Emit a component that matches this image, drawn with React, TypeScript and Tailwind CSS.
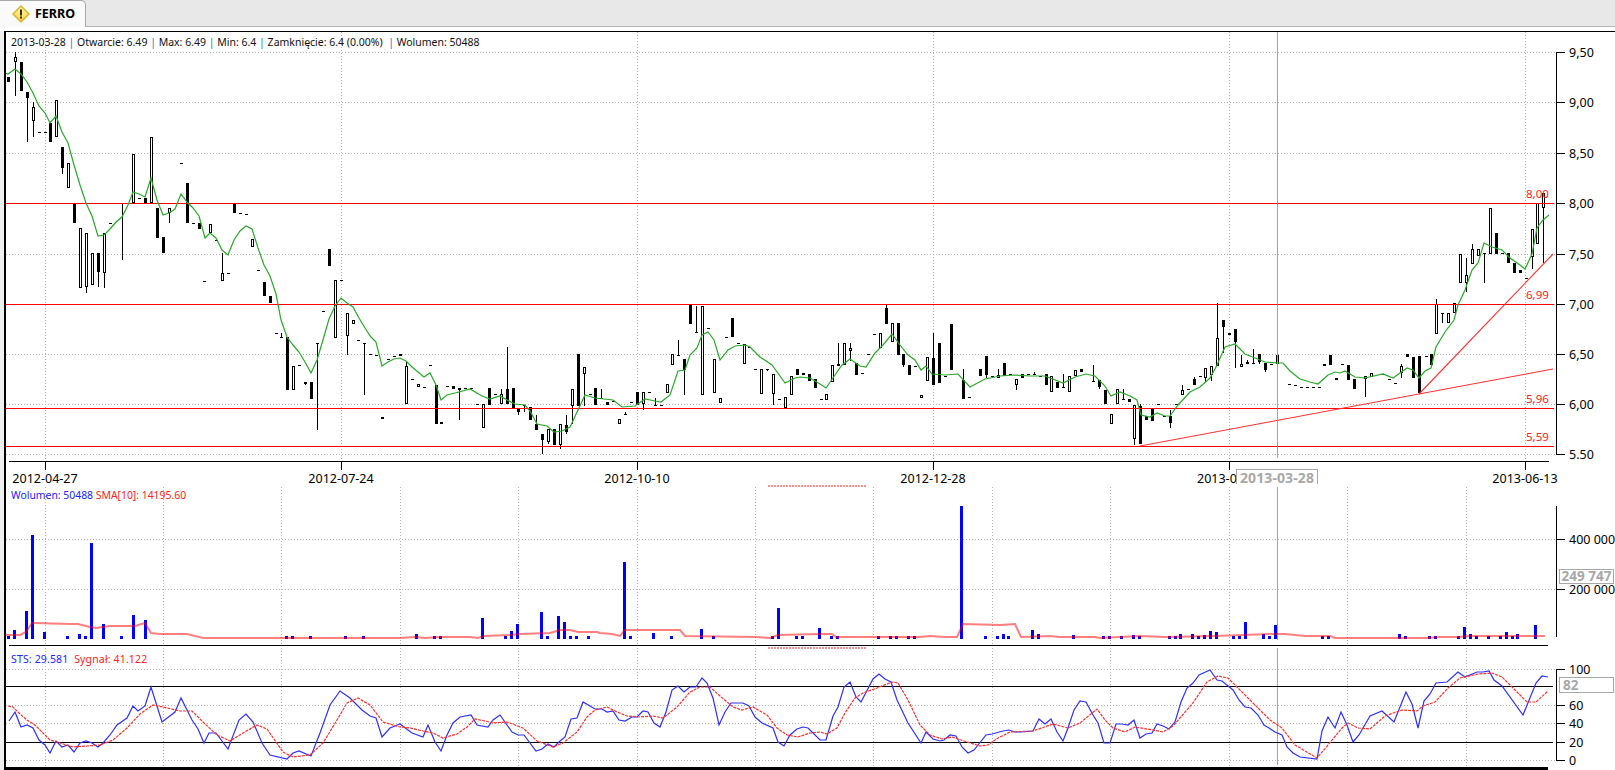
type Candle = [string, number, number, number, number?, number?];

// kind, x, body top, body bottom, wick top, wick bottom ("d" is a flat dash: x, y, y)
const candles: Candle[] = [
  ["f", 8, 77, 82], ["h", 15, 57, 62, 52, 96], ["f", 21, 62, 91], ["f", 27, 92, 98, 92, 142], ["h", 33, 107, 121, 102, 137],
  ["d", 39, 132, 132], ["d", 45, 132, 132], ["f", 50, 123, 142], ["h", 56, 100, 137], ["f", 62, 147, 168, 147, 174],
  ["h", 68, 163, 188], ["f", 74, 203, 223], ["h", 80, 228, 288], ["h", 86, 233, 287, 233, 293], ["h", 92, 253, 285],
  ["f", 98, 253, 272, 253, 287], ["h", 104, 233, 273, 233, 288], ["d", 110, 223, 223], ["d", 122, 203, 203, 203, 260],
  ["h", 133, 154, 203], ["d", 139, 198, 198], ["f", 145, 198, 203], ["h", 151, 137, 203], ["f", 157, 208, 238],
  ["f", 163, 237, 253], ["h", 169, 208, 213, 208, 223], ["d", 181, 163, 163], ["f", 187, 183, 223], ["d", 193, 223, 223],
  ["f", 199, 223, 229], ["d", 204, 281, 281], ["h", 210, 224, 233], ["d", 216, 240, 240], ["h", 222, 273, 281, 253, 281],
  ["d", 228, 273, 273], ["f", 234, 203, 213], ["d", 240, 213, 213], ["d", 246, 214, 214], ["h", 252, 239, 247],
  ["d", 258, 270, 270], ["f", 264, 282, 296], ["f", 270, 296, 303], ["d", 276, 333, 333], ["d", 281, 337, 337, 333, 337],
  ["f", 287, 337, 390], ["h", 293, 366, 390], ["d", 299, 365, 365], ["f", 305, 382, 384, 382, 385], ["f", 311, 382, 399],
  ["d", 317, 343, 343, 343, 430], ["d", 323, 311, 311], ["f", 329, 249, 266], ["h", 335, 280, 338], ["d", 341, 280, 280],
  ["h", 347, 313, 336, 313, 355], ["h", 353, 320, 324], ["d", 358, 340, 340], ["d", 364, 343, 343, 343, 395],
  ["d", 370, 354, 354], ["d", 376, 355, 355], ["f", 382, 417, 419], ["d", 388, 359, 359], ["d", 394, 356, 356],
  ["f", 400, 354, 356], ["h", 406, 366, 404, 361, 404], ["d", 412, 379, 379], ["h", 418, 384, 387], ["d", 424, 387, 387],
  ["d", 430, 365, 365], ["f", 436, 385, 424], ["f", 441, 422, 424], ["d", 447, 386, 386], ["f", 453, 386, 389],
  ["f", 459, 388, 390, 388, 420], ["d", 465, 388, 388], ["d", 471, 388, 388], ["d", 477, 404, 404], ["h", 483, 404, 428],
  ["f", 489, 388, 405], ["d", 495, 394, 394], ["h", 501, 394, 404, 389, 404], ["f", 507, 389, 404, 347, 404],
  ["f", 513, 388, 409], ["f", 518, 409, 412, 409, 415], ["d", 524, 405, 405, 405, 412], ["f", 530, 407, 420],
  ["f", 536, 424, 430, 415, 430], ["f", 542, 434, 440, 434, 454], ["h", 548, 429, 442, 429, 444], ["f", 554, 429, 445],
  ["h", 560, 424, 445, 424, 449], ["f", 566, 425, 432, 415, 434], ["h", 572, 389, 406, 389, 424], ["f", 578, 354, 406],
  ["h", 584, 367, 374, 367, 406], ["d", 590, 394, 394], ["f", 595, 388, 405], ["d", 601, 398, 398, 389, 398],
  ["f", 607, 402, 405], ["d", 613, 401, 401], ["h", 619, 419, 424], ["d", 625, 414, 414, 412, 414], ["d", 631, 402, 402],
  ["f", 637, 392, 405], ["h", 643, 392, 404, 392, 410], ["d", 649, 392, 392], ["d", 655, 405, 405, 398, 405],
  ["d", 661, 405, 405], ["h", 667, 384, 393], ["h", 672, 354, 365], ["d", 678, 355, 355, 340, 355],
  ["f", 684, 359, 370, 359, 395], ["f", 690, 305, 324], ["d", 696, 332, 332, 306, 332], ["h", 702, 306, 395],
  ["d", 708, 328, 328], ["h", 714, 359, 393], ["h", 720, 398, 403], ["d", 726, 337, 337], ["f", 732, 318, 337],
  ["d", 738, 343, 343], ["h", 744, 344, 364], ["d", 749, 347, 347], ["d", 755, 369, 369], ["h", 761, 369, 394],
  ["d", 767, 369, 369, 369, 371], ["h", 773, 374, 394, 374, 405], ["d", 779, 399, 399], ["h", 785, 397, 408],
  ["h", 791, 376, 395], ["f", 797, 369, 375], ["f", 803, 373, 375], ["f", 809, 374, 381], ["f", 815, 379, 388],
  ["f", 821, 399, 400], ["h", 826, 394, 400], ["h", 832, 365, 382], ["f", 838, 364, 366, 343, 366], ["h", 844, 343, 365],
  ["h", 850, 348, 351, 343, 361], ["f", 856, 363, 375], ["d", 862, 373, 373], ["d", 868, 354, 354], ["d", 874, 334, 334],
  ["h", 880, 333, 348], ["f", 886, 308, 324, 305, 324], ["h", 892, 323, 342], ["f", 898, 323, 355],
  ["f", 903, 354, 365, 354, 367], ["f", 909, 365, 375], ["d", 915, 366, 366], ["h", 921, 395, 398], ["h", 927, 357, 381],
  ["f", 933, 358, 385, 333, 385], ["f", 939, 343, 383], ["d", 945, 376, 376], ["f", 951, 324, 370],
  ["f", 963, 380, 399, 369, 399], ["d", 969, 397, 397], ["f", 980, 369, 376], ["f", 986, 356, 375, 356, 378],
  ["d", 992, 376, 376], ["h", 998, 375, 378, 369, 378], ["f", 1004, 363, 376], ["d", 1010, 374, 374],
  ["h", 1016, 379, 385, 379, 390], ["f", 1022, 374, 378], ["d", 1028, 374, 374], ["d", 1034, 374, 374, 372, 374],
  ["d", 1040, 376, 376], ["f", 1046, 374, 385], ["h", 1051, 376, 392], ["f", 1057, 382, 388, 382, 388],
  ["f", 1063, 387, 388, 374, 388], ["h", 1069, 376, 392], ["h", 1075, 370, 376], ["f", 1081, 369, 372],
  ["d", 1093, 381, 381, 365, 381], ["f", 1099, 380, 387, 380, 389], ["f", 1105, 390, 404], ["h", 1111, 414, 424],
  ["h", 1117, 389, 404], ["f", 1123, 399, 400, 389, 400], ["f", 1129, 399, 402], ["h", 1134, 405, 439, 405, 445],
  ["f", 1140, 406, 444, 404, 444], ["f", 1146, 416, 420], ["f", 1152, 409, 421], ["d", 1158, 404, 404], ["d", 1164, 416, 416],
  ["f", 1170, 416, 423, 410, 428], ["d", 1176, 404, 404], ["h", 1182, 390, 395, 385, 395], ["d", 1188, 389, 389],
  ["f", 1194, 379, 385, 377, 385], ["d", 1200, 376, 376], ["h", 1205, 368, 378, 368, 382], ["h", 1211, 366, 375, 366, 381],
  ["h", 1217, 338, 366, 303, 366], ["f", 1223, 320, 327, 320, 353], ["f", 1229, 333, 335], ["f", 1235, 329, 342, 329, 368],
  ["h", 1241, 364, 367, 355, 367], ["f", 1247, 362, 364, 360, 364], ["d", 1253, 363, 363, 349, 363],
  ["f", 1259, 354, 362, 354, 364], ["f", 1265, 363, 370, 363, 372], ["d", 1271, 364, 364], ["f", 1277, 355, 364],
  ["d", 1289, 384, 384], ["d", 1295, 385, 385], ["d", 1301, 387, 387], ["d", 1307, 387, 387], ["d", 1313, 387, 387],
  ["d", 1319, 387, 387], ["f", 1324, 364, 366], ["f", 1330, 355, 365], ["f", 1336, 378, 380], ["d", 1342, 364, 364],
  ["f", 1348, 365, 380], ["f", 1354, 379, 389], ["h", 1365, 376, 379, 376, 397], ["h", 1371, 373, 377], ["d", 1383, 374, 374],
  ["d", 1389, 379, 379], ["d", 1395, 383, 383], ["h", 1401, 366, 373, 364, 378], ["f", 1407, 354, 357], ["f", 1413, 357, 378],
  ["f", 1419, 356, 393], ["d", 1426, 356, 356], ["f", 1431, 354, 365], ["h", 1436, 304, 334, 299, 334],
  ["d", 1442, 313, 313, 313, 323], ["h", 1448, 313, 323], ["h", 1454, 303, 313], ["h", 1460, 254, 283],
  ["h", 1466, 275, 283, 258, 292], ["h", 1472, 249, 264, 244, 264], ["h", 1478, 249, 256], ["d", 1484, 253, 253, 253, 283],
  ["h", 1490, 208, 254], ["f", 1496, 233, 254], ["d", 1502, 253, 253], ["f", 1508, 253, 263], ["f", 1514, 263, 273],
  ["f", 1520, 270, 273], ["d", 1526, 278, 278], ["h", 1532, 229, 257, 229, 269], ["h", 1537, 203, 244],
  ["h", 1543, 193, 208, 193, 263],
];

const priceSma =
  "5,73 8,74 15,69 21,74 27,82 33,93 39,106 45,113 50,123 56,116 62,132 68,143 74,165 80,185 86,203 92,216 98,236 104,235 110,229 116,222 122,217 128,205 133,192 139,194 145,197 151,178 157,200 163,215 169,213 175,209 181,194 187,202 193,208 199,216 205,238 210,233 216,238 222,250 228,255 234,240 240,231 246,226 252,229 258,248 264,265 270,276 276,294 281,320 287,337 293,345 299,352 305,362 311,373 317,360 323,340 329,319 335,306 341,298 347,303 353,307 359,318 365,328 371,337 376,342 382,366 388,362 394,359 400,358 406,361 412,367 424,377 430,373 436,385 441,400 447,395 459,392 470,389 482,396 490,399 500,396 507,400 515,404 525,405 530,411 537,424 547,426 554,432 562,431 570,427 578,410 585,395 595,398 613,400 622,407 635,406 645,399 655,401 661,402 670,395 678,371 685,370 690,355 697,348 702,335 708,332 714,340 720,360 728,350 735,346 745,345 750,347 760,357 772,365 780,376 785,383 795,378 800,377 810,378 820,384 826,388 835,375 842,365 850,359 860,366 866,367 875,353 883,345 892,334 900,345 908,355 915,360 921,370 926,366 932,374 945,375 958,374 970,387 985,379 1000,376 1015,375 1030,376 1045,376 1063,383 1075,377 1086,374 1095,376 1105,386 1111,396 1120,392 1130,396 1137,400 1141,415 1150,417 1157,413 1165,416 1170,416 1178,405 1190,392 1200,387 1210,378 1217,365 1225,347 1235,344 1245,354 1255,358 1265,362 1277,363 1283,363 1290,371 1300,379 1310,382 1318,384 1328,375 1335,372 1340,373 1345,371 1355,377 1365,378 1383,374 1393,378 1407,368 1413,370 1419,378 1425,371 1431,368 1436,347 1445,332 1454,320 1458,305 1465,290 1472,270 1478,263 1484,243 1492,247 1502,250 1510,258 1520,265 1525,269 1532,254 1537,228 1543,220 1549,215";

const volumeBars: [number, number][] = [
  [8, 636], [14, 630], [26, 611], [32, 535], [44, 632], [67, 636], [79, 634], [85, 636], [91, 543], [103, 624], [121, 636], [133, 615], [145, 620],
  [286, 636], [292, 636], [310, 636], [345, 636], [363, 636], [416, 634], [434, 636], [440, 636], [482, 618], [505, 636], [511, 631], [517, 624],
  [541, 612], [547, 636], [558, 616], [564, 622], [570, 636], [576, 636], [588, 636], [624, 562], [630, 636], [653, 633], [671, 636], [701, 629],
  [713, 636], [772, 636], [778, 608], [796, 636], [802, 636], [819, 628], [831, 636], [837, 636], [878, 636], [890, 636], [896, 636], [908, 636],
  [914, 636], [961, 506], [985, 636], [997, 636], [1003, 634], [1008, 636], [1032, 630], [1038, 634], [1073, 635], [1103, 636], [1109, 636],
  [1121, 636], [1133, 635], [1139, 636], [1169, 636], [1175, 636], [1180, 634], [1192, 634], [1198, 636], [1204, 635], [1210, 631], [1216, 632],
  [1233, 636], [1239, 636], [1245, 622], [1263, 634], [1269, 636], [1275, 625], [1322, 636], [1328, 636], [1399, 634], [1405, 636], [1429, 636],
  [1435, 636], [1458, 636], [1464, 627], [1470, 634], [1476, 636], [1488, 636], [1500, 636], [1506, 632], [1512, 636], [1517, 634], [1535, 625],
];

const volumeSma =
  "5,635 20,635 26,632 32,623 35,623 70,624 78,624 90,627 96,628 110,626 135,626 145,623 151,633 160,634 187,634 195,636 203,638 400,638 415,637 425,638 440,637 470,637 478,638 484,636 510,635 520,634 550,633 560,630 570,630 578,632 597,632 600,633 612,634 620,636 625,630 680,630 685,636 755,637 770,638 778,635 820,634 832,634 836,637 900,637 920,637 930,636 945,637 957,637 963,624 1000,625 1015,624 1021,637 1050,636 1060,637 1095,637 1100,638 1120,637 1140,636 1165,637 1215,636 1270,634 1285,634 1295,635 1305,636 1330,636 1335,638 1428,638 1440,637 1458,637 1470,636 1530,636 1545,636";

const stsLine =
  "9,721 15,712 21,727 27,725 33,728 39,740 45,745 50,753 56,741 62,747 68,745 74,752 80,743 86,741 92,743 98,747 103,743 110,735 117,725 127,718 133,706 138,711 145,706 151,687 162,722 175,712 181,698 192,720 198,729 204,743 209,733 216,733 228,749 239,720 246,714 253,722 262,743 270,755 287,759 293,753 299,751 311,756 320,733 330,705 340,691 350,698 362,710 370,716 376,718 382,737 390,728 400,724 412,733 423,737 428,725 435,742 441,751 447,735 453,723 460,717 471,715 477,725 488,727 493,720 500,715 512,732 518,735 524,735 536,751 542,749 548,744 554,747 560,741 565,737 571,719 577,718 583,702 595,709 602,709 607,712 613,711 619,720 625,721 632,717 637,717 643,711 648,712 654,723 660,727 666,712 672,690 678,686 684,692 690,687 696,687 702,678 707,683 713,698 719,725 725,712 731,703 743,703 749,706 755,717 762,723 773,728 778,742 784,746 790,735 797,729 803,727 808,728 820,740 826,740 833,716 838,707 844,687 850,682 856,697 861,702 873,679 879,674 885,679 891,682 897,700 908,723 921,743 926,732 933,739 940,741 944,740 950,735 956,736 962,747 968,753 974,750 986,735 992,734 1003,731 1009,730 1015,732 1021,732 1033,731 1039,719 1045,724 1051,719 1057,732 1063,741 1068,728 1074,710 1080,701 1086,702 1093,715 1098,723 1104,743 1110,743 1116,724 1122,724 1128,725 1134,720 1140,738 1146,734 1152,733 1157,724 1163,726 1169,729 1175,722 1181,702 1187,688 1193,683 1199,675 1210,670 1217,680 1222,681 1233,690 1239,700 1245,707 1251,708 1258,715 1264,725 1269,728 1275,732 1282,735 1287,747 1293,753 1300,757 1317,759 1322,731 1328,717 1335,728 1341,712 1347,725 1353,742 1359,735 1370,716 1382,711 1394,722 1406,692 1412,704 1418,728 1424,701 1430,694 1436,683 1447,682 1458,672 1465,677 1477,672 1483,672 1489,671 1494,680 1502,686 1523,715 1536,683 1542,676 1548,677";

const stsSignal =
  "8,706 13,707 20,714 27,720 35,725 43,733 50,740 60,743 73,747 87,746 100,745 113,740 127,728 140,714 153,705 163,707 180,711 192,711 203,722 217,735 230,741 243,733 257,725 267,729 283,752 293,757 310,755 323,743 337,720 347,703 358,698 370,705 383,722 400,727 410,728 423,731 433,733 443,738 457,734 467,727 475,719 485,721 493,723 507,722 523,728 537,741 553,747 563,743 577,732 587,717 595,710 607,707 617,712 627,716 640,717 653,716 663,718 677,707 690,692 700,687 710,687 720,696 733,707 742,710 753,707 767,715 777,728 787,735 798,737 810,733 820,732 827,734 837,728 845,713 855,698 863,693 877,688 892,682 898,683 908,700 920,725 930,735 942,739 952,737 967,742 980,746 988,745 998,738 1010,732 1033,731 1053,724 1068,728 1080,723 1097,709 1105,720 1113,728 1125,732 1135,727 1153,730 1163,732 1173,726 1193,703 1207,682 1218,676 1228,678 1242,692 1258,708 1270,720 1282,728 1295,745 1317,758 1328,745 1342,728 1348,723 1358,728 1370,729 1385,716 1402,710 1417,711 1423,706 1435,702 1448,688 1460,678 1478,674 1492,673 1502,677 1515,690 1527,702 1536,702 1548,691";

const bigGrid = [45, 341, 637, 933, 1229, 1525];
const smallGrid = [45, 163, 281, 400, 518, 637, 755, 873, 992, 1110, 1229, 1347, 1466];
const priceRows = [
  { y: 52, label: "9,50" }, { y: 102, label: "9,00" }, { y: 153, label: "8,50" }, { y: 203, label: "8,00" }, { y: 254, label: "7,50" },
  { y: 304, label: "7,00" }, { y: 354, label: "6,50" }, { y: 404, label: "6,00" }, { y: 454, label: "5.50" },
];
const levels = [
  { y: 203, label: "8,00" }, { y: 304, label: "6,99" }, { y: 408, label: "5,96" }, { y: 446, label: "5,59" },
];
const dates = ["2012-04-27", "2012-07-24", "2012-10-10", "2012-12-28", "2013-0", "2013-06-13"];
const stsRows = [
  { y: 669, label: "100" }, { y: 705, label: "60" }, { y: 723, label: "40" }, { y: 742, label: "20" }, { y: 760, label: "0" },
];

function CandleMark({ c }: { c: Candle }) {
  const [kind, x, top, bottom, wickTop, wickBottom] = c;
  return (
    <g>
      {wickTop !== undefined && wickBottom !== undefined && <rect x={x} y={wickTop} width={1} height={wickBottom - wickTop} fill="#000" />}
      {kind === "f" && <rect x={x - 1} y={top} width={3} height={bottom - top} fill="#000" />}
      {kind === "h" && <rect x={x - 0.5} y={top + 0.5} width={2} height={bottom - top - 1} fill="#fff" stroke="#000" />}
      {kind === "d" && <rect x={x - 1} y={top} width={3} height={1} fill="#000" />}
    </g>
  );
}

function HDots({ y }: { y: number }) {
  return <line x1={6} x2={1555} y1={y + 0.5} y2={y + 0.5} stroke="#b4b4b4" strokeDasharray="1 2" />;
}

function VDots({ x, y1, y2 }: { x: number; y1: number; y2: number }) {
  return <line x1={x + 0.5} x2={x + 0.5} y1={y1} y2={y2} stroke="#b4b4b4" strokeDasharray="1 2" />;
}

function Tick({ y, label }: { y: number; label: string }) {
  return (
    <g>
      <rect x={1556} y={y} width={9} height={1} fill="#000" />
      <text x={1569} y={y + 5} className="fill-black text-[12.5px]">{label}</text>
    </g>
  );
}

function PricePanel() {
  return (
    <div className="relative h-[455px] shrink-0">
      <svg viewBox="6 32 1609 455" className="block h-full w-full" shapeRendering="crispEdges">
        {priceRows.map((r) => <HDots key={r.y} y={r.y} />)}
        {bigGrid.map((x) => <VDots key={x} x={x} y1={32} y2={461} />)}
        {candles.map((c, i) => <CandleMark key={i} c={c} />)}
        {levels.map((l) => (
          <g key={l.y}>
            <rect x={6} y={l.y} width={1548} height={1} fill="#ff0000" />
            <text x={1526} y={l.y - 5} className="fill-[#ff2020] text-[11.5px]">{l.label}</text>
          </g>
        ))}
        <line x1={1140} y1={446} x2={1553} y2={369} stroke="#ff3030" shapeRendering="auto" />
        <line x1={1419} y1={394} x2={1553} y2={254} stroke="#ff3030" strokeWidth={1.1} shapeRendering="auto" />
        <polyline points={priceSma} fill="none" stroke="#2aa82a" strokeWidth={1.2} shapeRendering="auto" />
        <rect x={1277} y={32} width={1} height={426} fill="#a4a4a4" />
        <rect x={9} y={461} width={1540} height={1} fill="#000" />
        {bigGrid.map((x) => <rect key={x} x={x} y={461} width={1} height={9} fill="#000" />)}
        {dates.map((d, i) => (
          <text key={d} x={i === 4 ? 1197 : bigGrid[i]} y={483} textAnchor={i === 4 ? "start" : "middle"} className="fill-black text-[12.5px]">{d}</text>
        ))}
        <line x1={768} x2={867} y1={486} y2={486} stroke="#ff9090" strokeWidth={2} strokeDasharray="2 1" />
        <rect x={1556} y={52} width={1} height={403} fill="#000" />
        {priceRows.map((r) => <Tick key={r.y} y={r.y} label={r.label} />)}
      </svg>
      <div className="absolute left-[5px] top-[3px] whitespace-pre text-[10.5px] leading-[14px] text-[#111]">
        2013-03-28 <span className="text-[#2f74b5]">|</span> Otwarcie: 6.49 <span className="text-[#2f74b5]">|</span> Max: 6.49 <span className="text-[#2f74b5]">|</span> Min: 6.4 <span className="text-[#2f74b5]">|</span> Zamknięcie: 6.4 (0.00%)  <span className="text-[#2f74b5]">|</span> Wolumen: 50488
      </div>
      <div className="absolute bottom-[3px] left-[1230px] h-[15px] w-[82px] border border-b-0 border-[#a8a8a8] bg-white text-center text-[14px] font-bold leading-[16px] tracking-[0.1px] text-[#a8a8a8]">
        2013-03-28
      </div>
    </div>
  );
}

function VolumePanel() {
  return (
    <div className="relative h-[160px] shrink-0">
      <svg viewBox="6 487 1609 160" className="block h-full w-full" shapeRendering="crispEdges">
        <HDots y={539} />
        <HDots y={589} />
        {smallGrid.map((x) => <VDots key={x} x={x} y1={487} y2={645} />)}
        <rect x={1277} y={487} width={1} height={153} fill="#a4a4a4" />
        {volumeBars.map(([x, top]) => <rect key={x} x={x - 1} y={top} width={3} height={639 - top} fill="#0000ff" />)}
        <polyline points={volumeSma} fill="none" stroke="#ff0000" strokeOpacity={0.5} strokeWidth={2} shapeRendering="auto" />
        <rect x={9} y={645} width={1539} height={1} fill="#000" />
        <rect x={1556} y={506} width={1} height={131} fill="#000" />
        <Tick y={539} label="400 000" />
        <Tick y={589} label="200 000" />
      </svg>
      <div className="absolute left-[5px] top-[1px] whitespace-pre text-[10.4px] leading-[14px] text-[#2222ff]">
        Wolumen: 50488 <span className="text-[#ff2020]">SMA[10]: 14195.60</span>
      </div>
      <div className="absolute left-[1553px] top-[82px] h-[15px] w-[55px] border border-[#a8a8a8] bg-white text-center text-[13.5px] font-bold leading-[13px] text-[#a8a8a8]">
        249 747
      </div>
    </div>
  );
}

function StsPanel() {
  return (
    <div className="relative min-h-0 flex-1">
      <svg viewBox="6 647 1609 123" className="block h-[123px] w-full" shapeRendering="crispEdges">
        {[669, 705, 723, 760].map((y) => <HDots key={y} y={y} />)}
        {smallGrid.map((x) => <VDots key={x} x={x} y1={648} y2={767} />)}
        <rect x={1277} y={648} width={1} height={117} fill="#a4a4a4" />
        <line x1={768} x2={867} y1={648} y2={648} stroke="#ff9090" strokeWidth={2} strokeDasharray="2 1" />
        <rect x={6} y={686} width={1547} height={1} fill="#000" />
        <rect x={6} y={742} width={1547} height={1} fill="#000" />
        <polyline points={stsLine} fill="none" stroke="#2f2fff" strokeWidth={1.2} shapeRendering="auto" />
        <polyline points={stsSignal} fill="none" stroke="#ff3030" strokeWidth={1.2} strokeDasharray="3 1" shapeRendering="auto" />
        <rect x={6} y={767} width={1542} height={3} fill="#000" />
        <rect x={1556} y={669} width={1} height={92} fill="#000" />
        {stsRows.map((r) => <Tick key={r.y} y={r.y} label={r.label} />)}
      </svg>
      <div className="absolute left-[5px] top-[5px] whitespace-pre text-[10.5px] leading-[14px] tracking-[0.15px] text-[#2222ff]">
        STS: 29.581  <span className="text-[#ff2020]">Sygnał: 41.122</span>
      </div>
      <div className="absolute left-[1553px] top-[30px] h-[16px] w-[55px] border border-[#a8a8a8] bg-white pl-[3px] text-[13.5px] font-bold leading-[14px] text-[#a8a8a8]">
        82
      </div>
    </div>
  );
}

export default function App() {
  return (
    <div className="flex h-[770px] w-[1615px] flex-col overflow-hidden bg-[#f0f0f0] font-['Noto_Sans',sans-serif]">
      <div className="flex h-[27px] shrink-0 border-b border-[#b4b4b4] bg-[#e8e8e8]">
        <div className="relative flex h-[27px] w-[86px] items-center gap-[5px] rounded-tr-[5px] border-r border-t border-[#a8a8a8] bg-[#fafafa] pl-[12px]">
          <svg viewBox="0 0 18 18" className="h-[18px] w-[18px] shrink-0">
            <defs>
              <linearGradient id="warn" x1="0" y1="0" x2="0" y2="1">
                <stop offset="0" stopColor="#fff6b8" />
                <stop offset="1" stopColor="#f7d23a" />
              </linearGradient>
            </defs>
            <path d="M9 1 L17 9 L9 17 L1 9 Z" fill="url(#warn)" stroke="#d8b832" strokeWidth={1.6} strokeLinejoin="round" />
            <rect x={8} y={4.5} width={2} height={6} fill="#3a3000" />
            <rect x={8} y={11.5} width={2} height={2} fill="#3a3000" />
          </svg>
          <span className="text-[12.5px] font-bold text-black">FERRO</span>
        </div>
      </div>
      <div className="h-[4px] shrink-0 bg-white pl-[4px]" />
      <div className="ml-[4px] flex min-h-0 flex-1 flex-col border-l-2 border-t border-black bg-white">
        <PricePanel />
        <VolumePanel />
        <StsPanel />
      </div>
    </div>
  );
}
